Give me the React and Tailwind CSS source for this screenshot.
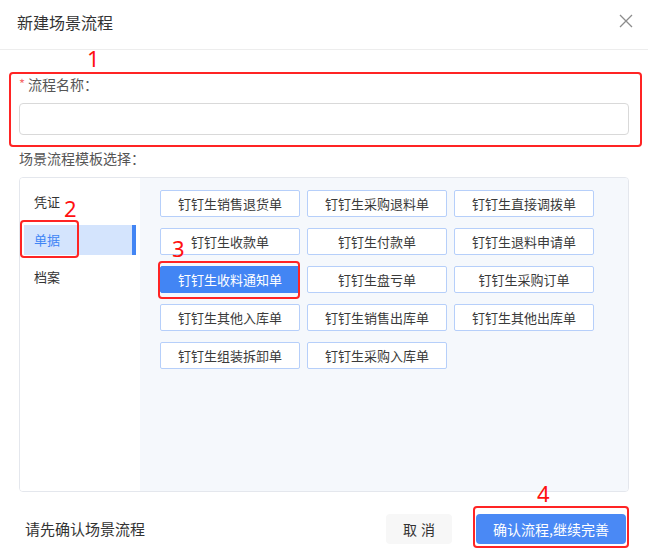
import React from "react";

const templates = [
  "钉钉生销售退货单",
  "钉钉生采购退料单",
  "钉钉生直接调拨单",
  "钉钉生收款单",
  "钉钉生付款单",
  "钉钉生退料申请单",
  "钉钉生收料通知单",
  "钉钉生盘亏单",
  "钉钉生采购订单",
  "钉钉生其他入库单",
  "钉钉生销售出库单",
  "钉钉生其他出库单",
  "钉钉生组装拆卸单",
  "钉钉生采购入库单",
];

const navItems = ["凭证", "单据", "档案"];

function Marker({ className, n }) {
  return (
    <div
      className={`absolute text-[22px] leading-none font-normal text-[#ff1010] ${className}`}
      style={{ fontFamily: '"Noto Sans", "Liberation Sans", sans-serif' }}
    >
      {n}
    </div>
  );
}

function Outline({ className }) {
  return (
    <div
      className={`absolute border-2 border-[#ff2424] rounded-[4px] pointer-events-none ${className}`}
    />
  );
}

export default function App() {
  return (
    <div
      className="relative w-[648px] h-[553px] bg-white text-[#333] overflow-hidden"
      style={{ fontFamily: '"Noto Sans CJK SC", "Noto Sans", sans-serif' }}
    >
      {/* dialog header */}
      <div className="h-[50px] border-b border-[#ededed] flex items-start justify-between pl-[17px] pr-[15px] pt-[11px]">
        <div className="text-[16px] leading-[22px] text-[#333]">新建场景流程</div>
        <button className="mt-[3px] w-[14px] h-[14px] flex items-center justify-center">
          <svg width="14" height="14" viewBox="0 0 14 14">
            <path d="M1 1 L13 13 M13 1 L1 13" stroke="#8c8c8c" strokeWidth="1.3" fill="none" />
          </svg>
        </button>
      </div>

      <div className="px-[19px]">
        {/* name field */}
        <div className="mt-[24px] h-[20px] flex items-center text-[14px] leading-[20px] text-[#555]">
          <span className="text-[#f56c6c] mr-[3px] text-[13px]">*</span>
          <span>流程名称：</span>
        </div>
        <input
          className="mt-[9px] w-full h-[32px] border border-[#d9d9d9] rounded-[4px] outline-none px-[10px] text-[14px]"
          type="text"
        />

        <div className="mt-[13px] h-[20px] text-[14px] leading-[20px] text-[#555]">场景流程模板选择：</div>

        {/* template picker */}
        <div className="mt-[9px] h-[315px] border border-[#e4e7ed] rounded-[4px] flex overflow-hidden">
          <div className="w-[120px] shrink-0 bg-white px-[4px] pt-[9px] flex flex-col gap-[7.5px]">
            {navItems.map((item) => {
              const active = item === "单据";
              return (
                <div
                  key={item}
                  className={`h-[30px] flex items-center pl-[10px] text-[13px] ${
                    active
                      ? "bg-[#d4e4fd] text-[#3f85f5] border-r-4 border-[#4285f4]"
                      : "text-[#333]"
                  }`}
                >
                  {item}
                </div>
              );
            })}
          </div>
          <div className="flex-1 bg-[#f5f8fc] pl-[20px] pt-[12px]">
            <div className="grid grid-cols-[140px_140px_140px] gap-x-[7px] gap-y-[11px]">
              {templates.map((t) => {
                const active = t === "钉钉生收料通知单";
                return (
                  <div
                    key={t}
                    className={`h-[27px] flex items-center justify-center rounded-[2px] text-[13px] border ${
                      active
                        ? "bg-[#4285f4] border-[#4285f4] text-white"
                        : "bg-white border-[#b6cffa] text-[#3a3a3a]"
                    }`}
                  >
                    {t}
                  </div>
                );
              })}
            </div>
          </div>
        </div>
      </div>

      {/* footer */}
      <div className="mt-[22px] pl-[25px] pr-[22px] flex items-center justify-between">
        <div className="text-[15px] text-[#333]">请先确认场景流程</div>
        <div className="flex items-center gap-[24px]">
          <button className="w-[66px] h-[30px] bg-[#f7f7f7] rounded-[4px] text-[14px] text-[#333] tracking-[4px] pl-[4px]">
            取消
          </button>
          <button className="w-[150px] h-[30px] bg-[#4a89f5] rounded-[4px] text-[14px] text-white">
            确认流程,继续完善
          </button>
        </div>
      </div>

      {/* step annotations */}
      <Outline className="left-[9px] top-[72px] w-[633px] h-[75px]" />
      <Marker className="left-[87px] top-[47px]" n="1" />
      <Outline className="left-[20px] top-[220px] w-[59px] h-[38px]" />
      <Marker className="left-[64px] top-[197px]" n="2" />
      <Outline className="left-[158px] top-[261px] w-[142px] h-[38px]" />
      <Marker className="left-[172px] top-[237px]" n="3" />
      <Outline className="left-[473px] top-[506px] w-[156px] h-[42px]" />
      <Marker className="left-[537px] top-[482px]" n="4" />
    </div>
  );
}
